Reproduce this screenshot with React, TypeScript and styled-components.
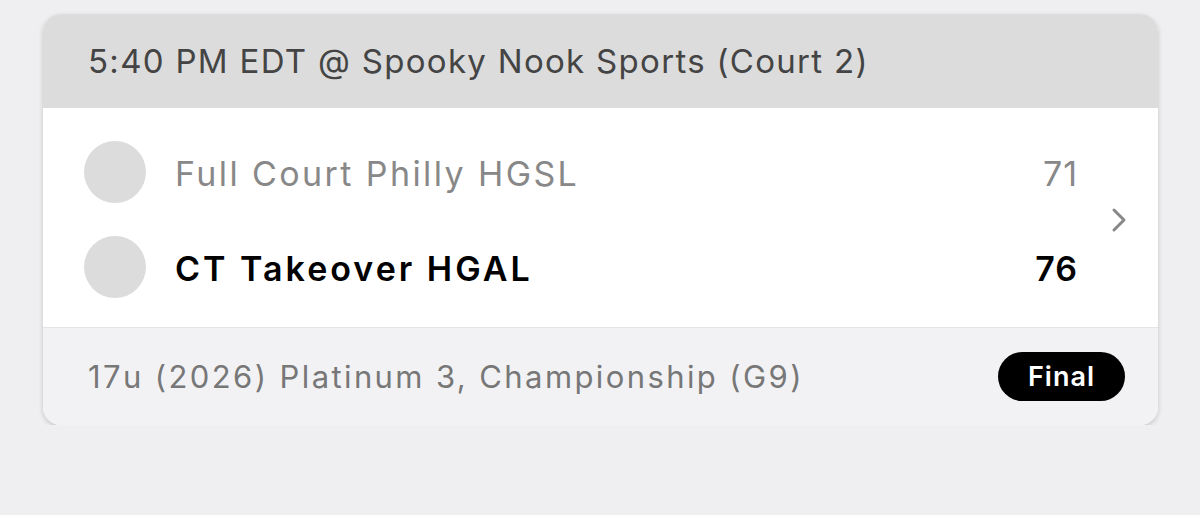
import styled, { createGlobalStyle } from "styled-components";

const GlobalStyle = createGlobalStyle`
  body {
    margin: 0;
    background: #efeff1;
    font-family: Inter, "Noto Sans", sans-serif;
  }
`;

const Page = styled.div`
  padding: 14px 42px 0 43px;
`;

const Card = styled.div`
  width: 1115px;
  border-radius: 18px;
  overflow: hidden;
  background: #fff;
  box-shadow: 0 2px 5px rgba(0, 0, 0, 0.18);
`;

const Header = styled.div`
  height: 94px;
  display: flex;
  align-items: center;
  padding-left: 45px;
  background: #dcdcdc;
  color: #444;
  font-size: 33px;
  letter-spacing: 1.3px;
`;

const Body = styled.div`
  display: flex;
  align-items: center;
  height: 220px;
  padding: 4px 30px 0 41px;
  border-bottom: 1px solid #e4e4e6;
  box-sizing: border-box;
`;

const Teams = styled.div`
  flex: 1;
  display: flex;
  flex-direction: column;
  gap: 33px;
`;

const Row = styled.div<{ $winner?: boolean }>`
  display: flex;
  align-items: center;
  height: 62px;
  color: ${(p) => (p.$winner ? "#000" : "#888")};
  font-weight: ${(p) => (p.$winner ? 600 : 400)};
  letter-spacing: ${(p) => (p.$winner ? "3px" : "2.4px")};
  font-size: 34px;
`;

const Logo = styled.div`
  width: 62px;
  height: 62px;
  border-radius: 50%;
  background: #dcdcdc;
  margin-right: 29px;
`;

const Name = styled.div`
  flex: 1;
  padding-top: 3px;
`;

const Score = styled.div`
  margin-right: 32px;
  padding-top: 3px;
  letter-spacing: 1px;
`;

const Chevron = styled.svg`
  width: 18px;
  height: 26px;
`;

const Footer = styled.div`
  height: 97px;
  display: flex;
  align-items: center;
  justify-content: space-between;
  padding: 0 33px 0 45px;
  background: #f2f2f4;
  color: #777;
  font-size: 31px;
  letter-spacing: 2.4px;
`;

const Pill = styled.div`
  height: 49px;
  padding: 0 30px;
  display: flex;
  align-items: center;
  border-radius: 25px;
  background: #000;
  color: #fff;
  font-weight: 600;
  font-size: 27px;
  letter-spacing: 1px;
`;

export default function App() {
  return (
    <Page>
      <GlobalStyle />
      <Card>
        <Header>5:40 PM EDT @ Spooky Nook Sports (Court 2)</Header>
        <Body>
          <Teams>
            <Row>
              <Logo />
              <Name>Full Court Philly HGSL</Name>
              <Score>71</Score>
            </Row>
            <Row $winner>
              <Logo />
              <Name>CT Takeover HGAL</Name>
              <Score>76</Score>
            </Row>
          </Teams>
          <Chevron viewBox="0 0 18 26" fill="none">
            <path d="M4 3 L14 13 L4 23" stroke="#888" strokeWidth="3" strokeLinecap="round" strokeLinejoin="round" />
          </Chevron>
        </Body>
        <Footer>
          <span>17u (2026) Platinum 3, Championship (G9)</span>
          <Pill>Final</Pill>
        </Footer>
      </Card>
    </Page>
  );
}
